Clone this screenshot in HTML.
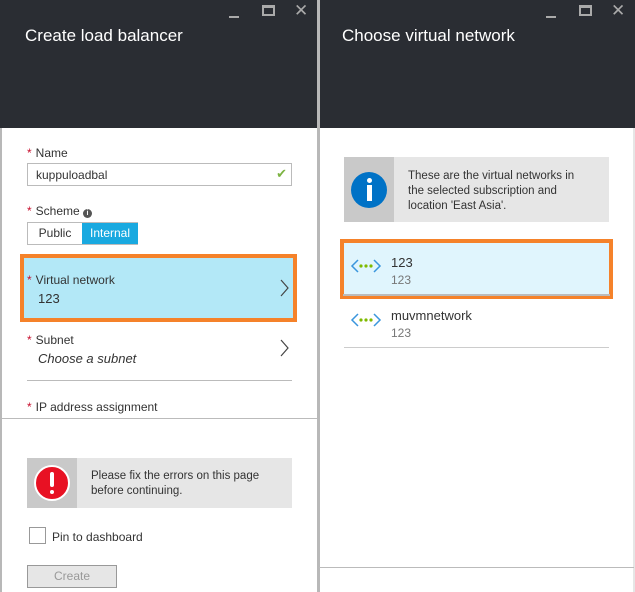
<!DOCTYPE html>
<html><head><style>
*{box-sizing:border-box;margin:0;padding:0}
body{width:635px;height:592px;background:#fff;font-family:"Liberation Sans",sans-serif;position:relative;overflow:hidden;color:#333}
.abs{position:absolute}
.hdr{background:#2a2d33;top:0;height:128px}
.title{color:#fff;font-size:17px;top:26px}
.ctl{color:#aaa;font-size:16px;top:2px}
.lbl{font-size:12px;color:#333}
.st{color:#c8102e;margin-right:4px}
</style></head><body>
<div class="abs hdr" style="left:0;width:317px"></div>
<div class="abs hdr" style="left:320px;width:315px"></div>
<div class="abs" style="left:317px;top:0;width:3px;height:592px;background:#b8b8b8"></div>
<div class="abs" style="left:0;top:128px;width:2px;height:464px;background:#b8b8b8"></div>
<div class="abs" style="left:633px;top:128px;width:2px;height:464px;background:#e6e6e6"></div>
<div class="abs title" style="left:25px">Create load balancer</div>
<div class="abs title" style="left:342px">Choose virtual network</div>
<div class="abs" style="left:229px;top:16px;width:10px;height:2px;background:#aaa"></div>
<div class="abs" style="left:262px;top:5px;width:13px;height:11px;border:2px solid #aaa;border-top-width:3px"></div>
<div class="abs ctl" style="left:294px;top:1px;font-size:17px">✕</div>
<div class="abs" style="left:546px;top:16px;width:10px;height:2px;background:#aaa"></div>
<div class="abs" style="left:579px;top:5px;width:13px;height:11px;border:2px solid #aaa;border-top-width:3px"></div>
<div class="abs ctl" style="left:611px;top:1px;font-size:17px">✕</div>

<div class="abs lbl" style="left:27px;top:146px"><span class="st">*</span>Name</div>
<div class="abs" style="left:27px;top:163px;width:265px;height:23px;border:1px solid #bbb;font-size:12px;padding:4px 8px">kuppuloadbal<span style="position:absolute;right:4px;top:2px;color:#7cb342;font-size:13px">✔</span></div>
<div class="abs lbl" style="left:27px;top:204px"><span class="st">*</span>Scheme <span style="display:inline-block;width:9px;height:9px;border-radius:50%;background:#555;color:#fff;font-size:7px;text-align:center;line-height:9px;font-weight:bold">i</span></div>
<div class="abs" style="left:27px;top:222px;width:111px;height:23px;border:1px solid #bbb;font-size:12px">
 <span style="position:absolute;left:0;top:0;width:54px;height:21px;text-align:center;line-height:21px">Public</span>
 <span style="position:absolute;left:54px;top:0;width:56px;height:21px;background:#19a9e0;color:#fff;text-align:center;line-height:21px">Internal</span></div>
<div class="abs" style="left:20px;top:254px;width:277px;height:68px;border:4px solid #f5822a;background:#b3e8f7"></div>
<div class="abs lbl" style="left:27px;top:273px"><span class="st">*</span>Virtual network</div>
<div class="abs" style="left:38px;top:291px;font-size:13px">123</div>
<svg class="abs" style="left:280px;top:279px" width="10" height="18"><path d="M1 1 L8 9 L1 17" stroke="#444" stroke-width="1.2" fill="none"/></svg>
<div class="abs lbl" style="left:27px;top:333px"><span class="st">*</span>Subnet</div>
<div class="abs" style="left:38px;top:351px;font-size:13px;font-style:italic">Choose a subnet</div>
<svg class="abs" style="left:280px;top:339px" width="10" height="18"><path d="M1 1 L8 9 L1 17" stroke="#444" stroke-width="1.2" fill="none"/></svg>
<div class="abs" style="left:27px;top:380px;width:265px;height:1px;background:#bbb"></div>
<div class="abs lbl" style="left:27px;top:400px"><span class="st">*</span>IP address assignment</div>
<div class="abs" style="left:2px;top:418px;width:315px;height:1px;background:#bbb"></div>
<div class="abs" style="left:27px;top:458px;width:265px;height:50px;background:#e6e6e6"></div>
<div class="abs" style="left:27px;top:458px;width:50px;height:50px;background:#c9c9c9"></div>
<div class="abs" style="left:34px;top:465px;width:36px;height:36px;border-radius:50%;background:#e81123;border:2px solid #fff"></div>
<div class="abs" style="left:50px;top:472px;width:4px;height:15px;border-radius:2px;background:#fff"></div>
<div class="abs" style="left:50px;top:490px;width:4px;height:4px;border-radius:2px;background:#fff"></div>
<div class="abs" style="left:91px;top:469px;font-size:11.5px;line-height:15px">Please fix the errors on this page<br>before continuing.</div>
<div class="abs" style="left:29px;top:527px;width:17px;height:17px;border:1px solid #999"></div>
<div class="abs" style="left:52px;top:530px;font-size:12px">Pin to dashboard</div>
<div class="abs" style="left:27px;top:565px;width:90px;height:23px;border:1px solid #999;background:#e6e6e6;color:#999;font-size:12px;text-align:center;line-height:21px">Create</div>

<div class="abs" style="left:344px;top:157px;width:265px;height:65px;background:#e6e6e6"></div>
<div class="abs" style="left:344px;top:157px;width:50px;height:65px;background:#c9c9c9"></div>
<div class="abs" style="left:351px;top:172px;width:36px;height:36px;border-radius:50%;background:#0072c6"></div>
<div class="abs" style="left:367px;top:178px;width:5px;height:5px;border-radius:50%;background:#fff"></div>
<div class="abs" style="left:367px;top:185px;width:5px;height:16px;background:#fff"></div>
<div class="abs" style="left:408px;top:169px;font-size:11.5px;line-height:15px">These are the virtual networks in<br>the selected subscription and<br>location 'East Asia'.</div>
<div class="abs" style="left:340px;top:239px;width:273px;height:60px;border:4px solid #f5822a;background:#e0f5fd"></div>
<div class="abs" style="left:343px;top:294px;width:267px;height:2px;background:#bbb"></div>
<svg class="abs" style="left:350px;top:258px" width="32" height="16"><path d="M8 2 L2 8 L8 14 M24 2 L30 8 L24 14" stroke="#3a96dd" stroke-width="1.5" fill="none"/><circle cx="11" cy="8" r="1.6" fill="#7fba00"/><circle cx="16" cy="8" r="1.6" fill="#7fba00"/><circle cx="21" cy="8" r="1.6" fill="#7fba00"/></svg>
<div class="abs" style="left:391px;top:255px;font-size:13px">123</div>
<div class="abs" style="left:391px;top:273px;font-size:12px;color:#777">123</div>
<svg class="abs" style="left:350px;top:312px" width="32" height="16"><path d="M8 2 L2 8 L8 14 M24 2 L30 8 L24 14" stroke="#3a96dd" stroke-width="1.5" fill="none"/><circle cx="11" cy="8" r="1.6" fill="#7fba00"/><circle cx="16" cy="8" r="1.6" fill="#7fba00"/><circle cx="21" cy="8" r="1.6" fill="#7fba00"/></svg>
<div class="abs" style="left:391px;top:308px;font-size:13px">muvmnetwork</div>
<div class="abs" style="left:391px;top:326px;font-size:12px;color:#777">123</div>
<div class="abs" style="left:344px;top:347px;width:265px;height:1px;background:#ccc"></div>
<div class="abs" style="left:319px;top:567px;width:315px;height:1px;background:#bbb"></div>
</body></html>
